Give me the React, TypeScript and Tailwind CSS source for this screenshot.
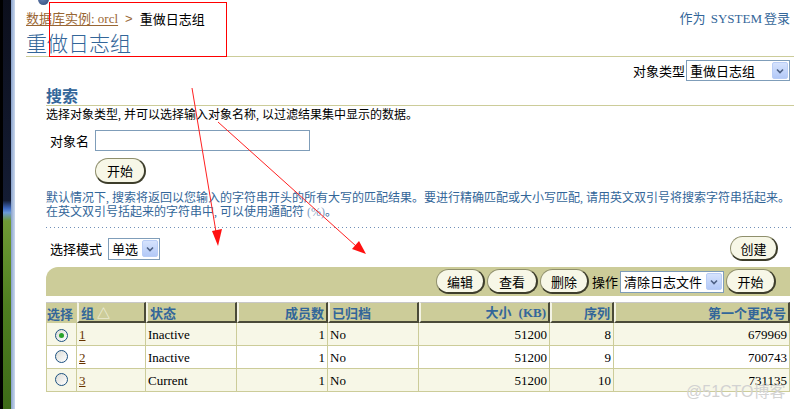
import React from "react";

const rows = [
  { id: "1", status: "Inactive", members: "1", archived: "No", size: "51200", seq: "8", scn: "679969", checked: true },
  { id: "2", status: "Inactive", members: "1", archived: "No", size: "51200", seq: "9", scn: "700743", checked: false },
  { id: "3", status: "Current", members: "1", archived: "No", size: "51200", seq: "10", scn: "731135", checked: false },
];

const PillButton = ({ label, className = "" }: { label: string; className?: string }) => (
  <button
    className={`h-[25px] rounded-full bg-[#f7f7e7] border border-[#8f8f6c] border-r-2 border-b-2 border-r-[#3d3d2b] border-b-[#3d3d2b] text-[13px] leading-none font-['Noto_Sans_CJK_SC',sans-serif] text-black ${className}`}
  >
    {label}
  </button>
);

const Select = ({ value, className = "" }: { value: string; className?: string }) => (
  <div
    className={`flex items-center justify-between h-[21px] bg-white border border-[#7f9db9] pl-[3px] pr-[1px] text-[13px] font-['Noto_Sans_CJK_SC',sans-serif] ${className}`}
  >
    <span className="leading-none">{value}</span>
    <span className="flex items-center justify-center w-[16px] h-[17px] rounded-[2px] border border-[#b9cdf6] bg-[linear-gradient(to_bottom,#d6e3fd,#b3c9f7)]">
      <svg width="8" height="6" viewBox="0 0 8 6">
        <path d="M1 1.5 L4 4.5 L7 1.5" stroke="#4d6185" strokeWidth="1.6" fill="none" />
      </svg>
    </span>
  </div>
);

const Radio = ({ checked }: { checked: boolean }) => (
  <span className="inline-flex items-center justify-center w-[13px] h-[13px] rounded-full border border-[#1c5180] bg-[linear-gradient(135deg,#dcdcd6,#ffffff)]">
    {checked && <span className="w-[5px] h-[5px] rounded-full bg-[#2aa32a]" />}
  </span>
);

const DesktopStrip = () => (
  <div className="flex w-[15px] shrink-0">
    <div className="w-[3px] bg-black" />
    <div className="w-[8px] bg-[linear-gradient(to_bottom,#0c0f1c_0%,#141c33_49%,#3f6bc4_51%,#6b9bd8_52%,#6f9a35_54%,#4f7f20_75%,#3d6a18_100%)]" />
    <div className="w-[4px] bg-[linear-gradient(to_right,#8aa3cc,#c9d7ec)]" />
  </div>
);

const thBevel =
  "h-[21px] px-[2px] bg-[#cccc99] border-t border-t-[#c8c8c8] border-l-2 border-l-[#f3f3e4] border-r-2 border-r-[#4a4a38] border-b-2 border-b-[#4a4a38] text-[13px] font-bold text-[#336699] font-['Noto_Sans_CJK_SC',sans-serif] leading-none";

const td = "h-[23px] px-[2px] border-b border-r border-[#cccc99] text-[13px] leading-none";

export default function App() {
  return (
    <div className="relative flex w-[794px] h-[409px] overflow-hidden bg-white text-[12px] text-black font-['Liberation_Serif','Noto_Sans_CJK_SC',serif]">
      <DesktopStrip />

      <main className="flex-1 flex flex-col pl-[11px]">
        {/* page header */}
        <div className="h-[6px] relative">
          <span className="absolute left-[12px] -top-[6px] w-[11px] h-[11px] rounded-full bg-[radial-gradient(circle_at_40%_40%,#6b86b8,#2c4775)]" />
        </div>
        <div className="mt-[4px] h-[18px] flex items-center justify-between pr-[4px]">
          <div className="flex items-center text-[13px]">
            <a className="text-[#996633] underline decoration-1 underline-offset-2">数据库实例: orcl</a>
            <span className="mx-[7px] text-[#996633] font-['Liberation_Sans',sans-serif]">&gt;</span>
            <span className="font-['Noto_Sans_CJK_SC',sans-serif]">重做日志组</span>
          </div>
          <div className="text-[13px] text-[#336699]">
            作为 <span className="mx-[2px]">SYSTEM</span>登录
          </div>
        </div>
        <div className="mt-[2px] h-[27px] border-b border-[#cccc99]">
          <h1 className="text-[21px] leading-[24px] text-[#336699] font-['Noto_Sans_CJK_SC',sans-serif] font-light">
            重做日志组
          </h1>
        </div>

        <div className="mt-[3px] h-[21px] flex items-center justify-end pr-[4px]">
          <span className="text-[13px] font-['Noto_Sans_CJK_SC',sans-serif] mr-[1px]">对象类型</span>
          <Select value="重做日志组" className="w-[104px]" />
        </div>

        {/* search section */}
        <section className="pl-[20px] flex flex-col">
          <div className="h-[25px] border-b border-[#cccc99] pt-[5px]">
            <h2 className="text-[16px] leading-[18px] font-bold text-[#336699] font-['Noto_Sans_CJK_SC',sans-serif]">
              搜索
            </h2>
          </div>
          <p className="mt-[2px] leading-[14px]">选择对象类型, 并可以选择输入对象名称, 以过滤结果集中显示的数据。</p>

          <div className="mt-[8px] h-[21px] flex items-center pl-[4px]">
            <label className="w-[45px] text-[13px] font-['Noto_Sans_CJK_SC',sans-serif]">对象名</label>
            <input className="w-[215px] h-[21px] border border-[#7f9db9] bg-white outline-none" />
          </div>

          <div className="mt-[7px] pl-[49px]">
            <PillButton label="开始" className="w-[51px] h-[26px]" />
          </div>

          <p className="mt-[7px] leading-[14px] text-[#336699]">
            默认情况下, 搜索将返回以您输入的字符串开头的所有大写的匹配结果。要进行精确匹配或大小写匹配, 请用英文双引号将搜索字符串括起来。
            <br />
            在英文双引号括起来的字符串中, 可以使用通配符 <span className="text-[#7f9fc4]">(%)</span>。
          </p>

          <div className="mt-[8px] h-px bg-[linear-gradient(to_right,#6f8fb8_1px,transparent_1px)] bg-[length:4px_1px] bg-repeat-x" />

          <div className="mt-[8px] h-[25px] flex items-center justify-between pl-[4px] pr-[16px]">
            <div className="flex items-center">
              <span className="w-[58px] text-[13px] font-['Noto_Sans_CJK_SC',sans-serif]">选择模式</span>
              <Select value="单选" className="w-[52px] h-[22px]" />
            </div>
            <PillButton label="创建" className="w-[48px]" />
          </div>

          {/* table toolbar */}
          <div className="mt-[6px] mr-[4px] h-[29px] rounded-tl-[12px] bg-[#cccc99] flex items-center justify-end gap-[2px] pr-[14px]">
            <PillButton label="编辑" className="w-[49px]" />
            <PillButton label="查看" className="w-[51px]" />
            <PillButton label="删除" className="w-[49px]" />
            <span className="text-[13px] font-['Noto_Sans_CJK_SC',sans-serif] ml-[1px]">操作</span>
            <Select value="清除日志文件" className="w-[104px] h-[22px]" />
            <PillButton label="开始" className="w-[50px]" />
          </div>

          {/* results table */}
          <table className="mt-[6px] w-[744px] border-separate border-spacing-0 table-fixed">
            <colgroup>
              <col className="w-[31px]" />
              <col className="w-[69px]" />
              <col className="w-[91px]" />
              <col className="w-[91px]" />
              <col className="w-[91px]" />
              <col className="w-[131px]" />
              <col className="w-[64px]" />
              <col className="w-[176px]" />
            </colgroup>
            <thead>
              <tr>
                <th className="h-[21px] px-[1px] bg-[#cccc99] border-t border-t-[#c8c8c8] text-left text-[13px] font-bold text-[#336699] font-['Noto_Sans_CJK_SC',sans-serif] leading-none">
                  选择
                </th>
                <th className={`${thBevel} text-left`}>
                  组 <span className="font-normal text-[#f7f7e7]">△</span>
                </th>
                <th className={`${thBevel} text-left`}>状态</th>
                <th className={`${thBevel} text-right`}>成员数</th>
                <th className={`${thBevel} text-left`}>已归档</th>
                <th className={`${thBevel} text-right`}>
                  大小 <span className="font-['Liberation_Serif',serif] ml-[4px]">(KB)</span>
                </th>
                <th className={`${thBevel} text-right`}>序列</th>
                <th className={`${thBevel} text-right`}>第一个更改号</th>
              </tr>
            </thead>
            <tbody>
              {rows.map((r, i) => (
                <tr key={r.id} className={i % 2 === 0 ? "bg-[#f7f7e7]" : "bg-white"}>
                  <td className={`${td} border-l text-center`}>
                    <Radio checked={r.checked} />
                  </td>
                  <td className={td}>
                    <a className="text-[#663300] underline decoration-1">{r.id}</a>
                  </td>
                  <td className={td}>{r.status}</td>
                  <td className={`${td} text-right`}>{r.members}</td>
                  <td className={td}>{r.archived}</td>
                  <td className={`${td} text-right`}>{r.size}</td>
                  <td className={`${td} text-right`}>{r.seq}</td>
                  <td className={`${td} text-right`}>{r.scn}</td>
                </tr>
              ))}
            </tbody>
          </table>
        </section>
      </main>

      {/* watermark */}
      <span className="absolute left-[686px] top-[380px] text-[16px] text-[#d2d2d2] font-['Liberation_Sans','Noto_Sans_CJK_SC',sans-serif]">
        @51CTO博客
      </span>

      {/* red annotations */}
      <div className="absolute left-[49px] top-[2px] w-[178px] h-[55px] border border-[#ff0000]" />
      <svg className="absolute inset-0 pointer-events-none" width="794" height="409" viewBox="0 0 794 409">
        <line x1="192" y1="88" x2="216" y2="232" stroke="#ff2020" strokeWidth="1" />
        <polygon points="212,231 222,229 218,246" fill="#ff1010" />
        <line x1="218" y1="122" x2="356" y2="246" stroke="#ff2020" strokeWidth="1" />
        <polygon points="352,249 359,241 366,254" fill="#ff1010" />
      </svg>
    </div>
  );
}
